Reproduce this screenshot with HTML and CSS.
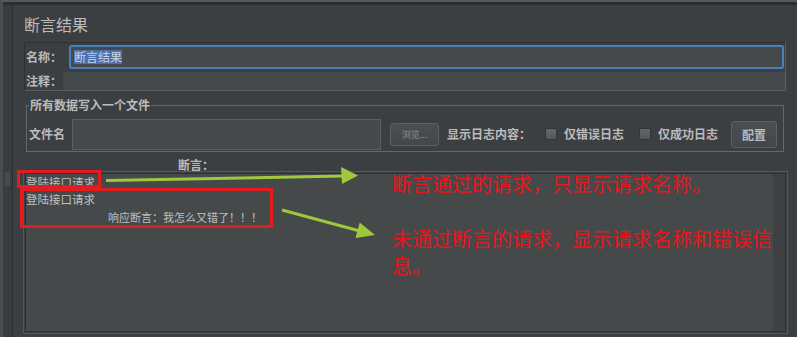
FILE: index.html
```html
<!DOCTYPE html>
<html lang="zh-CN">
<head>
    <meta charset="UTF-8">
    <title>断言结果</title>
    <link rel="stylesheet" href="styles.css">
</head>
<body>
<div class="window">
    <div class="side"><div class="grip"></div></div>
    <div class="main">
        <div class="title">断言结果</div>
        <div class="props">
            <div class="row row-name">
                <span class="lbl">名称：</span>
                <div class="field name-field"><span class="sel">断言结果</span></div>
            </div>
            <div class="row row-note">
                <span class="lbl">注释：</span>
                <div class="field note-field"></div>
            </div>
        </div>
        <fieldset class="file-box">
            <legend>所有数据写入一个文件</legend>
            <div class="file-row">
                <span class="lbl">文件名</span>
                <div class="field file-field"></div>
                <button class="btn browse">浏览...</button>
                <span class="lbl log-lbl">显示日志内容：</span>
                <span class="check check-err"></span><span class="lbl opt">仅错误日志</span>
                <span class="check check-ok"></span><span class="lbl opt">仅成功日志</span>
                <button class="btn conf">配置</button>
            </div>
        </fieldset>
        <div class="assert-lbl">断言：</div>
        <div class="result">
            <div class="list">
                <div class="item">登陆接口请求</div>
                <div class="item">登陆接口请求</div>
                <div class="item msg">响应断言：我怎么又错了！！！</div>
            </div>
            <div class="track"></div>
        </div>
    </div>
</div>

<!-- 标注：红框 + 箭头 -->
<svg class="marks" width="797" height="337" viewBox="0 0 797 337">
    <rect x="18.5" y="171.5" width="81" height="15" fill="none" stroke="#e41b1f" stroke-width="3"/>
    <rect x="21.5" y="189.5" width="250" height="37" fill="none" stroke="#e41b1f" stroke-width="3"/>
    <line x1="106" y1="180.5" x2="343" y2="176" stroke="#9fc83c" stroke-width="3"/>
    <polygon points="341,167 358,175.5 342,184" fill="#9fc83c"/>
    <line x1="282" y1="210" x2="358" y2="230.5" stroke="#9fc83c" stroke-width="3"/>
    <polygon points="359.7,222.6 375,235 355.5,238" fill="#9fc83c"/>
</svg>
<div class="note note-ok">断言通过的请求，只显示请求名称。</div>
<div class="note note-fail">未通过断言的请求，显示请求名称和错误信息。</div>
</body>
</html>
```

FILE: styles.css
```css
* { box-sizing: border-box; }
body { position: relative; margin: 0; width: 797px; height: 337px; overflow: hidden; background: #3c3f41; font-family: "Noto Sans CJK SC", "Liberation Sans", sans-serif; color: #bbbbbb; }

.window { display: flex; height: 337px; border-top: 2px solid #56595b; border-left: 3px solid #4b4e50; }
.side { width: 10px; background: #393c3e; border-right: 1px solid #2a2c2e; border-top: 3px solid #2b2e30; }
.grip { width: 5px; height: 14px; margin: 167px 0 0 2px; background-image: radial-gradient(#6a6d70 0.5px, transparent 0.8px); background-size: 2px 2px; }
.main { flex: 1; border-top: 3px solid #2b2e30; padding: 9px 11px 0 11px; }

.title { font-size: 16px; line-height: 20px; margin-bottom: 8px; color: #bdbdbd; }

.lbl { font-size: 12px; line-height: 14px; font-weight: bold; white-space: nowrap; color: #bbbbbb; }

.props { padding: 2px 0 0 1px; border: 1px solid; border-color: #2e3032 #5b5e60 #5b5e60 #2e3032; }
.row { display: flex; align-items: center; }
.row-name { height: 24px; }
.row-note { height: 18px; margin-top: 3px; }
.field { background: #45494a; }
.name-field { flex: 1; height: 24px; margin: 0 1px 0 7px; padding-left: 3px; border: 2px solid #4a7fbd; border-radius: 3px; display: flex; align-items: center; }
.sel { font-size: 12px; line-height: 14px; background: #4b70b0; color: #c9d2de; }
.note-field { flex: 1; height: 18px; margin-left: 1px; }

.file-box { margin: 7px 2px 0 2px; padding: 6px 6px 1px 2px; border: 1px solid #65686a; min-width: 0; }
.file-box legend { padding: 0 1px; font-size: 12px; line-height: 14px; font-weight: bold; color: #bbbbbb; }
.file-row { display: flex; align-items: center; height: 32px; }
.file-field { width: 309px; height: 31px; margin-left: 7px; border: 1px solid #5c5f61; }
.btn { font-family: inherit; border: 1px solid #5e6163; border-radius: 3px; background: linear-gradient(#4b4f51, #44474a); padding: 0; }
.browse { width: 49px; height: 23px; margin-left: 9px; font-size: 9px; color: #8c8f91; }
.log-lbl { margin-left: 8px; }
.check { width: 12px; height: 12px; border: 1px solid #333537; border-radius: 2px; background: linear-gradient(#63666a, #54575a); margin-right: 7px; }
.check-err { margin-left: 14px; }
.check-ok { margin-left: 15px; }
.conf { width: 46px; height: 27px; margin-left: 13px; font-size: 12px; font-weight: bold; color: #bbbbbb; }

.assert-lbl { margin-top: 5px; padding-left: 154px; font-size: 12px; line-height: 15px; font-weight: bold; }

.result { display: flex; height: 159px; margin: 1px 0 0 1px; background: #45494a; border: 1px solid #2e3133; outline: 1px solid #55585a; outline-offset: 1px; }
.list { flex: 1; }
.item { font-size: 11.5px; line-height: 17px; white-space: nowrap; color: #c0c0c0; }
.msg { padding-left: 82px; margin-top: 1px; font-size: 11px; }
.track { width: 12px; background: #3e4143; }

/* 标注层 */
.marks { position: absolute; top: 0; left: 0; pointer-events: none; }
.note { position: absolute; left: 392px; font-size: 20px; line-height: 27px; color: #e6161d; }
.note-ok { top: 170px; white-space: nowrap; }
.note-fail { top: 225px; width: 390px; }
```
